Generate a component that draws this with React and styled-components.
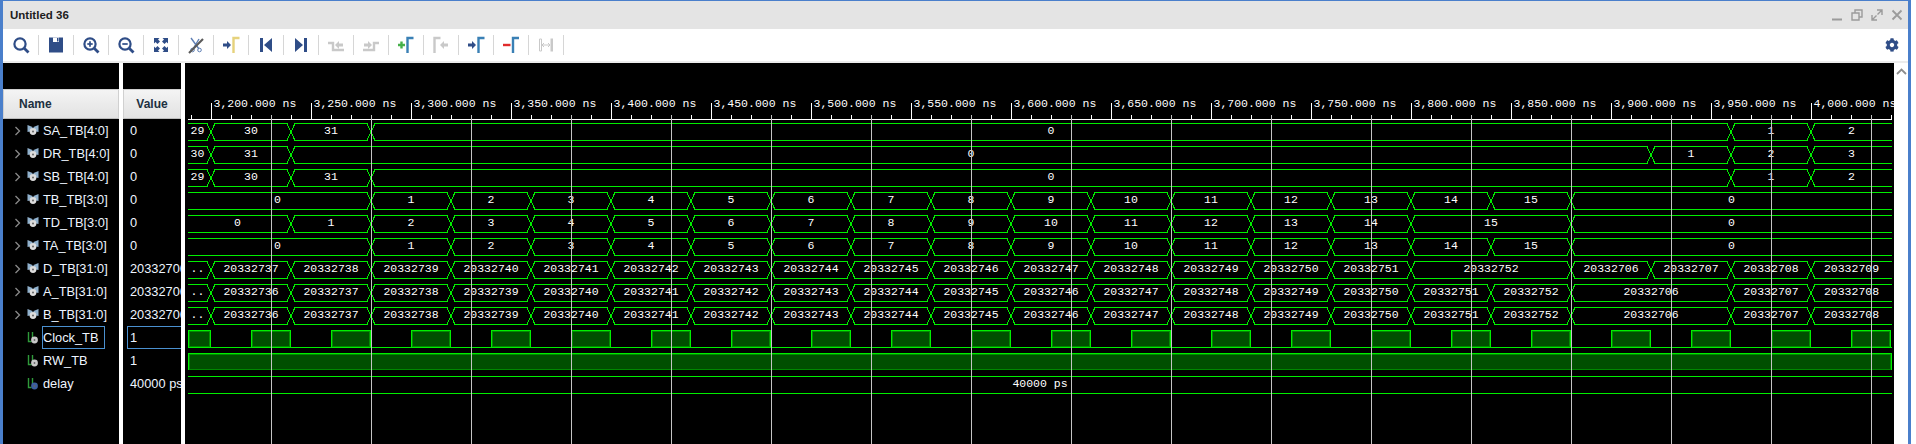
import React from "react";
import styled, { createGlobalStyle } from "styled-components";
import { FaCog } from "react-icons/fa";

const GlobalStyle = createGlobalStyle`
  * {
    margin: 0;
    padding: 0;
    box-sizing: border-box;
  }
  body {
    background: #fff;
    overflow: hidden;
    font-family: "Liberation Sans", Arial, sans-serif;
  }
`;

const NAVY = "#2f4d87";
const MARKER = "#3a80b5";
const OFF = "#c9c9c9";
const GREEN = "#00ee00";

const Page = styled.div`
  width: 1916px;
  height: 444px;
  background: #fff;
`;
const Frame = styled.div`
  width: 1911px;
  height: 444px;
  border-top: 1px solid #4a7fcb;
  border-left: 3px solid #4a7fcb;
  border-right: 3px solid #4a7fcb;
  display: flex;
  flex-direction: column;
`;
const TitleBar = styled.div`
  height: 28px;
  flex: none;
  background: #e4e4e4;
  display: flex;
  align-items: center;
  justify-content: space-between;
  padding: 0 4px 0 7px;
`;
const Title = styled.span`
  font-size: 11.5px;
  font-weight: bold;
  color: #1c1c1c;
`;
const WindowButtons = styled.div`
  display: flex;
  gap: 6px;
`;
const Toolbar = styled.div`
  height: 34px;
  flex: none;
  background: #fff;
  border-bottom: 2px solid #ececec;
  display: flex;
  align-items: center;
  padding-left: 1px;
`;
const Tool = styled.div`
  width: 34px;
  height: 20px;
  display: flex;
  align-items: center;
  justify-content: center;
`;
const Sep = styled.div`
  width: 1px;
  height: 20px;
  background: #d6d6d6;
`;
const Gear = styled.div`
  margin-left: auto;
  margin-right: 9px;
  display: flex;
  color: ${NAVY};
  font-size: 14px;
`;
const Body = styled.div`
  flex: 1;
  display: flex;
  min-height: 0;
  background: #fff;
`;
const Panel = styled.div`
  width: ${(p) => p.$w}px;
  margin-right: 4px;
  background: #000;
  padding-top: 26px;
  overflow: hidden;
  flex: none;
`;
const Head = styled.div`
  height: 30px;
  background: linear-gradient(#f4f4f4, #e2e2e2);
  border: 1px solid #d0d0d0;
  border-bottom-color: #bbb;
  display: flex;
  align-items: center;
  justify-content: ${(p) => (p.$center ? "center" : "flex-start")};
  padding-left: ${(p) => (p.$center ? 0 : 15)}px;
  font-size: 12px;
  font-weight: bold;
  color: #20303f;
`;
const NameRow = styled.div`
  height: 23px;
  display: flex;
  align-items: center;
  padding-left: 11px;
  color: #eef5ff;
  font-size: 12.8px;
  white-space: nowrap;
`;
const ChevronSlot = styled.div`
  width: 13px;
  display: flex;
`;
const NameText = styled.span`
  height: 23px;
  line-height: 21px;
  margin-left: 3px;
  width: 63px;
  border: 1px solid ${(p) => (p.$selected ? "#4a90d0" : "transparent")};
`;
const ValueRow = styled.div`
  height: 23px;
  margin-left: 4px;
  padding-left: 2px;
  line-height: 21px;
  color: #eef5ff;
  font-size: 12.8px;
  white-space: nowrap;
  overflow: hidden;
  border: 1px solid ${(p) => (p.$selected ? "#4a90d0" : "transparent")};
  border-right: none;
`;
const WaveSvg = styled.svg`
  display: block;
  width: 1709px;
  height: 381px;
  flex: none;
  background: #000;
`;
const RulerLabel = styled.text`
  font-family: "Liberation Mono", "Courier New", monospace;
  font-size: 11.5px;
  fill: #fff;
`;
const ValueLabel = styled.text`
  font-family: "Liberation Mono", "Courier New", monospace;
  font-size: 11.5px;
  fill: #fff;
  text-anchor: middle;
`;
const Scroll = styled.div`
  width: 14px;
  flex: none;
  background: #fff;
  display: flex;
  justify-content: center;
  padding-top: 5px;
`;

// icons
const Ic = ({ children }) => (
  <svg width="20" height="20" viewBox="0 0 20 20">
    {children}
  </svg>
);

const Lens = ({ sign }) => (
  <Ic>
    <circle cx="9" cy="9" r="5.6" fill="none" stroke={NAVY} strokeWidth="2.2" />
    <path d="M13.2 13.2 L17.5 17.5" stroke={NAVY} strokeWidth="2.8" />
    {sign && <path d="M6.3 9 H11.7" stroke={NAVY} strokeWidth="1.7" />}
    {sign === "+" && <path d="M9 6.3 V11.7" stroke={NAVY} strokeWidth="1.7" />}
  </Ic>
);
const Save = () => (
  <Ic>
    <path d="M3 2.5 H17 V17.5 H3 Z" fill={NAVY} />
    <path d="M7 2.5 H13 V7 H7 Z" fill="#fff" />
    <path d="M11 3 H12.5 V6.5 H11 Z" fill={NAVY} />
  </Ic>
);
const Fit = () => (
  <Ic>
    <g fill={NAVY}>
      <path d="M3 3 H8.5 L7 4.5 L9 6.5 L6.5 9 L4.5 7 L3 8.5 Z" />
      <path d="M17 3 H11.5 L13 4.5 L11 6.5 L13.5 9 L15.5 7 L17 8.5 Z" />
      <path d="M3 17 H8.5 L7 15.5 L9 13.5 L6.5 11 L4.5 13 L3 11.5 Z" />
      <path d="M17 17 H11.5 L13 15.5 L11 13.5 L13.5 11 L15.5 13 L17 11.5 Z" />
    </g>
  </Ic>
);
const Cut = () => (
  <Ic>
    <path d="M5 3 L13 14 M13 4 L7 14" stroke="#5f7fb5" strokeWidth="1.4" fill="none" />
    <circle cx="6.5" cy="15" r="1.8" fill="none" stroke="#5f7fb5" />
    <circle cx="13.5" cy="15" r="1.8" fill="none" stroke="#5f7fb5" />
    <path d="M3 18 L17 4" stroke="#5a5a5a" strokeWidth="2.2" />
  </Ic>
);
const ArrowR = ({ x, color }) => (
  <path d={`M${x} 8.5 H${x + 4} V6 L${x + 8} 10 L${x + 4} 14 V11.5 H${x} Z`} fill={color} />
);
const ArrowL = ({ x, color }) => (
  <path d={`M${x + 8} 8.5 H${x + 4} V6 L${x} 10 L${x + 4} 14 V11.5 H${x + 8} Z`} fill={color} />
);
const Gamma = ({ x, color }) => (
  <path d={`M${x} 18 V3 H${x + 6}`} fill="none" stroke={color} strokeWidth="2.4" />
);
const GoMarker = () => (
  <Ic>
    <ArrowR x={2} color={NAVY} />
    <Gamma x={12.5} color="#e6d27c" />
  </Ic>
);
const First = () => (
  <Ic>
    <path d="M4 3 H7 V17 H4 Z M16 3 V17 L8 10 Z" fill={NAVY} />
  </Ic>
);
const Last = () => (
  <Ic>
    <path d="M13 3 H16 V17 H13 Z M4 3 V17 L12 10 Z" fill={NAVY} />
  </Ic>
);
const PrevEdge = () => (
  <Ic>
    <path d="M2 8 H7 V15 H18" fill="none" stroke={OFF} strokeWidth="2.4" />
    <ArrowL x={9} color={OFF} />
  </Ic>
);
const NextEdge = () => (
  <Ic>
    <path d="M2 15 H13 V8 H18" fill="none" stroke={OFF} strokeWidth="2.4" />
    <ArrowR x={3} color={OFF} />
  </Ic>
);
const AddMarker = () => (
  <Ic>
    <path d="M2 10 H9 M5.5 6.5 V13.5" stroke="#46b04a" strokeWidth="2.4" />
    <Gamma x={11.5} color={MARKER} />
  </Ic>
);
const PrevMarker = () => (
  <Ic>
    <Gamma x={3.5} color={OFF} />
    <ArrowL x={9} color={OFF} />
  </Ic>
);
const NextMarker = () => (
  <Ic>
    <ArrowR x={2} color={NAVY} />
    <Gamma x={12.5} color={MARKER} />
  </Ic>
);
const DelMarker = () => (
  <Ic>
    <path d="M2 10 H9.5" stroke="#e02b2b" strokeWidth="2.4" />
    <Gamma x={12} color={MARKER} />
  </Ic>
);
const Swap = () => (
  <Ic>
    <path d="M3.5 4 H5.5 V16 H3.5 Z" fill="none" stroke={OFF} />
    <path d="M14.5 3.5 H17 V16.5 H14.5 Z" fill={OFF} />
    <path d="M6 10 H14 M6 10 L8 8 M6 10 L8 12 M14 10 L12 8 M14 10 L12 12" stroke={OFF} fill="none" />
  </Ic>
);

const WinIcon = ({ children }) => (
  <svg width="14" height="14" viewBox="0 0 14 14" fill="none" stroke="#9b9b9b" strokeWidth="1.4">
    {children}
  </svg>
);

const Chevron = () => (
  <svg width="7" height="10" viewBox="0 0 7 10" fill="none" stroke="#8a8a8a" strokeWidth="1.3">
    <path d="M1.5 1 L5.5 5 L1.5 9" />
  </svg>
);
const BusIcon = () => (
  <svg width="12" height="13" viewBox="0 0 12 13">
    <path d="M0.5 1 L5.5 3 V7 L0.5 8 Z" fill="#8fb0cc" />
    <path d="M11.5 1 L6.5 3 V7 L11.5 8 Z" fill="#8fb0cc" />
    <circle cx="6" cy="7.5" r="3.4" fill="#dcdcdc" />
    <circle cx="6" cy="7.5" r="1" fill="#666" />
  </svg>
);
const BitIcon = ({ dot }) => (
  <svg width="12" height="13" viewBox="0 0 12 13" fill="none">
    <path d="M1.5 1 V10.5 H4.5 M5.5 1 V7" stroke="#2f9a3a" strokeWidth="1.4" />
    <circle cx="7.5" cy="9" r="3.4" fill={dot} />
    <circle cx="7.5" cy="9" r="0.9" fill="#666" />
  </svg>
);

// waveform data
const START = 188;
const END = 1892;

const counter = (first, from, count) =>
  Array.from({ length: count }, (_, i) => [from + 80 * i, String(first + i)]);

const sa = [[START, "29"], [211, "30"], [291, "31"], [371, "0"], [1731, "1"], [1811, "2"]];
const dr = [[START, "30"], [211, "31"], [291, "0"], [1651, "1"], [1731, "2"], [1811, "3"]];
const tb = [[START, "0"], ...counter(1, 371, 15), [1571, "0"]];
const td = [[START, "0"], ...counter(1, 291, 14), [1411, "15"], [1571, "0"]];
const dBus = [
  [START, ".."],
  ...counter(20332737, 211, 15),
  [1411, "20332752"],
  [1571, "20332706"],
  [1651, "20332707"],
  [1731, "20332708"],
  [1811, "20332709"],
];
const aBus = [
  [START, ".."],
  ...counter(20332736, 211, 17),
  [1571, "20332706"],
  [1731, "20332707"],
  [1811, "20332708"],
];

const signals = [
  { name: "SA_TB[4:0]", value: "0", segs: sa },
  { name: "DR_TB[4:0]", value: "0", segs: dr },
  { name: "SB_TB[4:0]", value: "0", segs: sa },
  { name: "TB_TB[3:0]", value: "0", segs: tb },
  { name: "TD_TB[3:0]", value: "0", segs: td },
  { name: "TA_TB[3:0]", value: "0", segs: tb },
  { name: "D_TB[31:0]", value: "20332706", segs: dBus },
  { name: "A_TB[31:0]", value: "20332706", segs: aBus },
  { name: "B_TB[31:0]", value: "20332706", segs: aBus },
  { name: "Clock_TB", value: "1", bit: true, selected: true, clock: true },
  { name: "RW_TB", value: "1", bit: true, high: true },
  { name: "delay", value: "40000 ps", bit: true, segs: [[START, "40000 ps"]], dot: "#3c5f9e" },
];

const rowTop = (i) => 123 + 23 * i;

function Bus({ row, segs }) {
  const top = rowTop(row) + 0.5;
  const bottom = top + 17;
  let d = "";
  segs.forEach(([a], i) => {
    const b = i + 1 < segs.length ? segs[i + 1][0] : END;
    const x1 = i === 0 ? a : a + 4;
    const x2 = b === END ? b : b - 4;
    d += `M${x1} ${top} H${x2} M${x1} ${bottom} H${x2} `;
    if (i > 0) d += `M${a - 4} ${top} L${a + 4} ${bottom} M${a - 4} ${bottom} L${a + 4} ${top} `;
  });
  return (
    <g>
      <path d={d} fill="none" stroke={GREEN} shapeRendering="crispEdges" />
      {segs.map(([a, label], i) => {
        const b = i + 1 < segs.length ? segs[i + 1][0] : END;
        const mid = i === 0 && segs.length > 1 ? (a + b - 4) / 2 : (a + b) / 2;
        return (
          <ValueLabel key={i} x={mid} y={rowTop(row) + 10.5}>
            {label}
          </ValueLabel>
        );
      })}
    </g>
  );
}

function HighBlock({ row, x1, x2 }) {
  const top = rowTop(row);
  return (
    <g shapeRendering="crispEdges">
      <rect x={x1} y={top} width={x2 - x1} height={17} fill="#004f00" />
      <path d={`M${x1 + 0.5} ${top + 17} V${top + 0.5} H${x2 - 0.5} V${top + 17}`} fill="none" stroke={GREEN} />
      <path d={`M${x1 + 1.5} ${top + 16.5} V${top + 1.5} H${x2 - 1.5} V${top + 16.5}`} fill="none" stroke="#008c00" />
      <path d={`M${x1 + 1} ${top + 16.5} H${x2 - 1}`} stroke="#008800" />
    </g>
  );
}

function Clock({ row }) {
  const blocks = [[START, 211]];
  for (let x = 251; x < END; x += 80) blocks.push([x, Math.min(x + 40, END)]);
  const low = rowTop(row) + 17.5;
  return (
    <g>
      <path d={`M${START} ${low} H${END}`} stroke={GREEN} shapeRendering="crispEdges" />
      {blocks.map(([a, b]) => (
        <HighBlock key={a} row={row} x1={a} x2={b} />
      ))}
    </g>
  );
}

function Waves() {
  const ticks = [];
  for (let x = 191; x < END; x += 20) ticks.push(x);
  const majors = Array.from({ length: 17 }, (_, k) => 211 + 100 * k);
  const grid = Array.from({ length: 17 }, (_, k) => 271 + 100 * k);

  return (
    <WaveSvg viewBox="185 63 1709 381">
      <path d={`M${START} 119.5 H${END}`} stroke="#fff" shapeRendering="crispEdges" />
      {ticks.map((x) => (
        <path key={x} d={`M${x + 0.5} 115 V119`} stroke="#fff" shapeRendering="crispEdges" />
      ))}
      {majors.map((x, k) => {
        const t = 3200 + 50 * k;
        const text = `${Math.floor(t / 1000)},${String(t % 1000).padStart(3, "0")}.000 ns`;
        return (
          <g key={x}>
            <path d={`M${x + 0.5} 103 V119`} stroke="#fff" shapeRendering="crispEdges" />
            <RulerLabel x={x + 2.5} y={106.5}>
              {text}
            </RulerLabel>
          </g>
        );
      })}
      {signals.map((s, i) => {
        if (s.clock) return <Clock key={s.name} row={i} />;
        if (s.high) return <HighBlock key={s.name} row={i} x1={START} x2={END} />;
        return <Bus key={s.name} row={i} segs={s.segs} />;
      })}
      {grid.map((x) => (
        <path key={x} d={`M${x + 0.5} 115 V444`} stroke="#c4c4c4" shapeRendering="crispEdges" />
      ))}
    </WaveSvg>
  );
}

const tools = [
  <Lens />, <Save />, <Lens sign="+" />, <Lens sign="-" />, <Fit />, <Cut />, <GoMarker />, <First />,
  <Last />, <PrevEdge />, <NextEdge />, <AddMarker />, <PrevMarker />, <NextMarker />, <DelMarker />, <Swap />,
];

export default function App() {
  return (
    <Page>
      <GlobalStyle />
      <Frame>
        <TitleBar>
          <Title>Untitled 36</Title>
          <WindowButtons>
            <WinIcon><path d="M2 11.5 H12" strokeWidth="2" /></WinIcon>
            <WinIcon><path d="M2 5 H9 V12 H2 Z M5 5 V2 H12 V9 H9" /></WinIcon>
            <WinIcon><path d="M7 2 H12 V7 M12 2 L7.5 6.5 M2 7 V12 H7 M2 12 L6.5 7.5" /></WinIcon>
            <WinIcon><path d="M2.5 2.5 L11.5 11.5 M11.5 2.5 L2.5 11.5" strokeWidth="1.8" /></WinIcon>
          </WindowButtons>
        </TitleBar>
        <Toolbar>
          {tools.map((icon, i) => (
            <React.Fragment key={i}>
              <Tool>{icon}</Tool>
              <Sep />
            </React.Fragment>
          ))}
          <Gear><FaCog /></Gear>
        </Toolbar>
        <Body>
          <Panel $w={116}>
            <Head>Name</Head>
            {signals.map((s) => (
              <NameRow key={s.name}>
                <ChevronSlot>{!s.bit && <Chevron />}</ChevronSlot>
                {s.bit ? <BitIcon dot={s.dot || "#c8c8c8"} /> : <BusIcon />}
                <NameText $selected={s.selected}>{s.name}</NameText>
              </NameRow>
            ))}
          </Panel>
          <Panel $w={58}>
            <Head $center>Value</Head>
            {signals.map((s) => (
              <ValueRow key={s.name} $selected={s.selected}>
                {s.value}
              </ValueRow>
            ))}
          </Panel>
          <Waves />
          <Scroll>
            <svg width="11" height="7" viewBox="0 0 11 7" fill="none" stroke="#8c8c8c" strokeWidth="1.8">
              <path d="M1 6 L5.5 1.5 L10 6" />
            </svg>
          </Scroll>
        </Body>
      </Frame>
    </Page>
  );
}
